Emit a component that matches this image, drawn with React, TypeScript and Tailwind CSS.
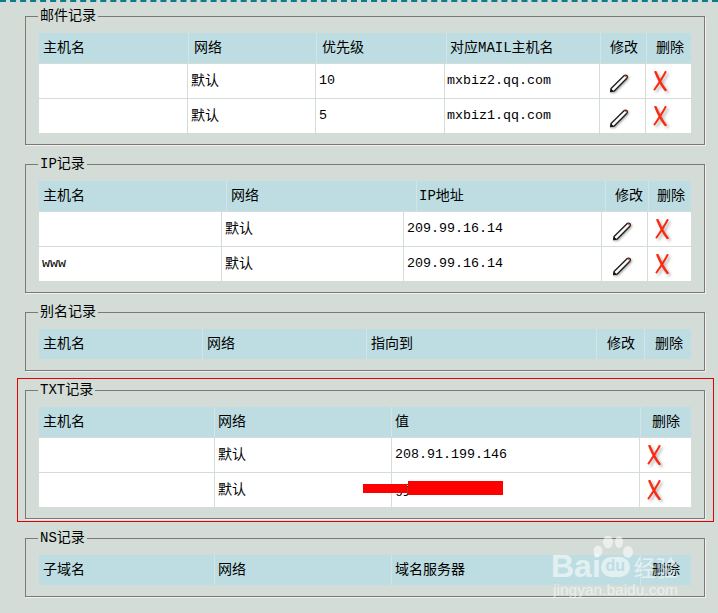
import React from "react";

type Cell = { text?: string; cls: string; icon?: "edit" | "del" };
type Section = { title: string; head: Cell[]; rows: Cell[][] };

const cjk = "font-['Liberation_Mono','Noto_Sans_CJK_SC',monospace]";
// latin values in the rows run at 8px per char
const val = "text-[13.33px]";

const PencilIcon = () => (
  <svg width="20" height="20" viewBox="0 0 24 24" className="mt-[4px] drop-shadow-[1px_1px_1px_rgba(0,0,0,0.35)]">
    <path d="M2.5 18.5 L18 3.2 Q20 2 21.5 3.3 Q22.7 5 21.4 6.4 L6 21.8 L2 22.4 Z" fill="#fff" stroke="#222" strokeWidth="1.7" strokeLinejoin="round" />
    <path d="M18.4 3.4 Q20 2.4 21.3 3.5 Q22.3 4.9 21.2 6.2 Z" fill="#f0503a" />
    <path d="M2.4 18.8 L5.8 22 L1.8 22.6 Z" fill="#111" />
  </svg>
);

const DeleteIcon = () => (
  <svg width="15" height="20" viewBox="0 0 15 20" className="-mt-[1px] drop-shadow-[2px_2px_1.5px_rgba(0,0,0,0.3)]">
    <path d="M2.5 1 C5 7 8.5 14 12.5 19" fill="none" stroke="#fa2a10" strokeWidth="2.4" strokeLinecap="round" />
    <path d="M12.5 1 C9.5 7 5 13.5 1.5 18.5" fill="none" stroke="#fa2a10" strokeWidth="2" strokeLinecap="round" />
  </svg>
);

const sections: Section[] = [
  {
    title: "邮件记录",
    head: [
      { text: "主机名", cls: "w-[150px] pl-[4px]" },
      { text: "网络", cls: "w-[128px] pl-[5px]" },
      { text: "优先级", cls: "w-[130px] pl-[5px]" },
      { text: "对应MAIL主机名", cls: "w-[154px] pl-[3px]" },
      { text: "修改", cls: "w-[46px] pl-[9px]" },
      { text: "删除", cls: "w-[44px] pl-[9px]" },
    ],
    rows: [
      [
        { cls: "w-[149px]" },
        { text: "默认", cls: "w-[128px] pl-[3px]" },
        { text: "10", cls: `w-[129px] pl-[3px] ${val}` },
        { text: "mxbiz2.qq.com", cls: `w-[155px] pl-[2px] ${val}` },
        { icon: "edit", cls: "w-[46px] pl-[9px]" },
        { icon: "del", cls: "w-[45px] pl-[7px]" },
      ],
      [
        { cls: "w-[149px]" },
        { text: "默认", cls: "w-[128px] pl-[3px]" },
        { text: "5", cls: `w-[129px] pl-[3px] ${val}` },
        { text: "mxbiz1.qq.com", cls: `w-[155px] pl-[2px] ${val}` },
        { icon: "edit", cls: "w-[46px] pl-[9px]" },
        { icon: "del", cls: "w-[45px] pl-[7px]" },
      ],
    ],
  },
  {
    title: "IP记录",
    head: [
      { text: "主机名", cls: "w-[188px] pl-[4px]" },
      { text: "网络", cls: "w-[190px] pl-[4px]" },
      { text: "IP地址", cls: "w-[189px] pl-[2px]" },
      { text: "修改", cls: "w-[43px] pl-[9px]" },
      { text: "删除", cls: "w-[42px] pl-[8px]" },
    ],
    rows: [
      [
        { cls: "w-[183px]" },
        { text: "默认", cls: "w-[182px] pl-[3px]" },
        { text: "209.99.16.14", cls: `w-[198px] pl-[3px] ${val}` },
        { icon: "edit", cls: "w-[46px] pl-[10px]" },
        { icon: "del", cls: "w-[43px] pl-[7px]" },
      ],
      [
        { text: "www", cls: `w-[183px] pl-[3px] ${val}` },
        { text: "默认", cls: "w-[182px] pl-[3px]" },
        { text: "209.99.16.14", cls: `w-[198px] pl-[3px] ${val}` },
        { icon: "edit", cls: "w-[46px] pl-[10px]" },
        { icon: "del", cls: "w-[43px] pl-[7px]" },
      ],
    ],
  },
  {
    title: "别名记录",
    head: [
      { text: "主机名", cls: "w-[164px] pl-[4px]" },
      { text: "网络", cls: "w-[164px] pl-[4px]" },
      { text: "指向到", cls: "w-[230px] pl-[4px]" },
      { text: "修改", cls: "w-[48px] pl-[10px]" },
      { text: "删除", cls: "w-[46px] pl-[10px]" },
    ],
    rows: [],
  },
  {
    title: "TXT记录",
    head: [
      { text: "主机名", cls: "w-[176px] pl-[4px]" },
      { text: "网络", cls: "w-[177px] pl-[3px]" },
      { text: "值", cls: "w-[249px] pl-[3px]" },
      { text: "删除", cls: "w-[50px] pl-[11px]" },
    ],
    rows: [
      [
        { cls: "w-[176px]" },
        { text: "默认", cls: "w-[177px] pl-[3px]" },
        { text: "208.91.199.146", cls: `w-[248px] pl-[3px] ${val}` },
        { icon: "del", cls: "w-[51px] pl-[7px]" },
      ],
      [
        { cls: "w-[176px]" },
        { text: "默认", cls: "w-[177px] pl-[3px]" },
        { text: "gj", cls: `w-[248px] pl-[3px] ${val}` },
        { icon: "del", cls: "w-[51px] pl-[7px]" },
      ],
    ],
  },
  {
    title: "NS记录",
    head: [
      { text: "子域名", cls: "w-[176px] pl-[4px]" },
      { text: "网络", cls: "w-[177px] pl-[3px]" },
      { text: "域名服务器", cls: "w-[249px] pl-[3px]" },
      { text: "删除", cls: "w-[50px] pl-[11px]" },
    ],
    rows: [],
  },
];

// site stamp sitting over the bottom right corner of the shot
const Watermark = () => (
  <div className="absolute left-[550px] top-[536px] w-[130px] flex flex-col items-start text-white/55 font-['Liberation_Sans',sans-serif]">
    <svg width="42" height="24" viewBox="0 0 42 24" className="ml-[43px]" fill="#fff" fillOpacity="0.55">
      <ellipse cx="5" cy="15" rx="4.5" ry="5.5" />
      <ellipse cx="15" cy="6" rx="5" ry="6.5" />
      <ellipse cx="26" cy="6" rx="4" ry="6" />
      <ellipse cx="35" cy="16" rx="5" ry="6" />
    </svg>
    <div className="flex items-center h-[24px] -mt-[6px]">
      <span className="ml-[1px] text-[32px] leading-[24px] font-bold">Bai</span>
      <span className="w-[29px] h-[20px] mt-[2px] rounded-full bg-white/55 text-center text-[16px] leading-[18px] font-bold text-[#bedde2]">du</span>
      <span className="ml-[4px] text-[22px] leading-[24px] font-['Noto_Sans_CJK_SC',sans-serif]">经验</span>
    </div>
    <span className="ml-[3px] mt-[3px] text-[15.5px] leading-[18px] whitespace-nowrap">jingyan.baidu.com</span>
  </div>
);

const CellView = ({ cell, head }: { cell: Cell; head?: boolean }) => (
  <div className={`${cell.cls} shrink-0 flex items-center border-r last:border-r-0 ${head ? "border-[#d3e4e6]" : "border-[#d3dcd7]"}`}>
    {cell.icon === "edit" && <PencilIcon />}
    {cell.icon === "del" && <DeleteIcon />}
    {cell.text}
  </div>
);

export default function App() {
  return (
    <div className={`relative w-[718px] h-[613px] overflow-hidden bg-[#d3dcd7] text-black text-[14px] ${cjk}`}>
      <div className="border-t-2 border-dashed border-[#0e7b8c] h-[7px]" />
      <div className="flex flex-col gap-[10px] pl-[25px]">
        {sections.map((s) => (
          <fieldset key={s.title} className="w-[680px] border border-[#7f7873] px-[13px] pt-[8px] pb-[11px] shadow-[1px_1px_0_#eef1ef]">
            <legend className="px-[2px] h-[18px] leading-[18px] -ml-[1px]">{s.title}</legend>
            <div className={`flex h-[30px] bg-[#bedde2] ${s.rows.length > 0 ? "mb-[1px]" : ""}`}>
              {s.head.map((c, i) => <CellView key={i} cell={c} head />)}
            </div>
            {s.rows.map((row, i) => (
              <div key={i} className="flex h-[35px] bg-white border-b border-[#d3dcd7] last:border-b-0 last:h-[34px]">
                {row.map((c, j) => <CellView key={j} cell={c} />)}
              </div>
            ))}
          </fieldset>
        ))}
      </div>

      {/* red annotation + redaction marks drawn over the shot */}
      <div className="absolute left-[17px] top-[378px] w-[697px] h-[144px] border border-[#e60000]" />
      <div className="absolute left-[363px] top-[484px] w-[44px] h-[9px] bg-[#ff0000]" />
      <div className="absolute left-[408px] top-[481px] w-[95px] h-[14px] bg-[#ff0000]" />
      <Watermark />
    </div>
  );
}
